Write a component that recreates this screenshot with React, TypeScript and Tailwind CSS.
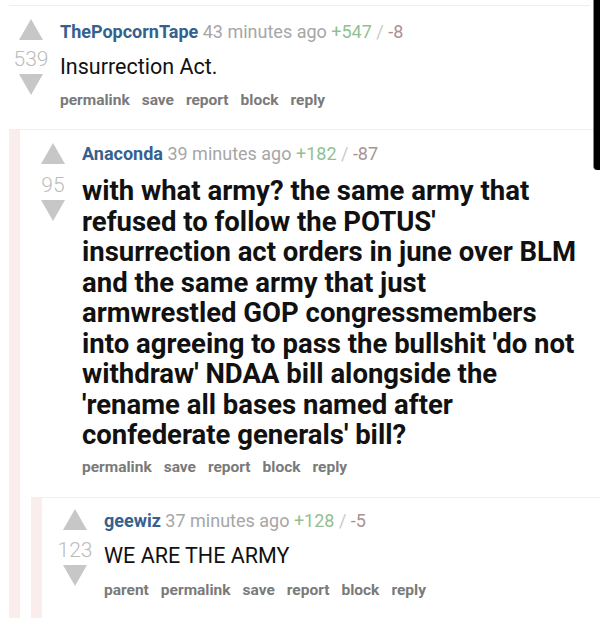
import React from "react";

function Up() {
  return (
    <svg width="24" height="21" viewBox="0 0 24 21" className="block">
      <polygon points="12,0 24,21 0,21" fill="#c7c7c7" />
    </svg>
  );
}
function Down() {
  return (
    <svg width="24" height="21" viewBox="0 0 24 21" className="block">
      <polygon points="0,0 24,0 12,21" fill="#c7c7c7" />
    </svg>
  );
}

function Links({ items }: { items: string[] }) {
  return (
    <div className="flex gap-[12px] text-[15.5px] leading-[20px] font-bold text-[#7a7a7a]">
      {items.map((i) => (
        <span key={i}>{i}</span>
      ))}
    </div>
  );
}

function Header({ user, time, up, down }: { user: string; time: string; up: string; down: string }) {
  return (
    <div className="text-[18px] leading-[24px] whitespace-nowrap">
      <span className="font-bold text-[#36618f]">{user}</span>{" "}
      <span className="text-[#a6a6a6]">{time}</span>{" "}
      <span className="text-[#92c092]">{up}</span>{" "}
      <span className="text-[#cacaca]">/</span>{" "}
      <span className="text-[#ab9292]">{down}</span>
    </div>
  );
}

function Votes({ score, numTop, downTop }: { score: string; numTop: string; downTop: string }) {
  return (
    <div className="w-[44px] flex flex-col items-center shrink-0">
      <Up />
      <div className={`text-[21px] leading-[22px] text-[#bcbcbc] font-light ${numTop}`}>{score}</div>
      <div className={downTop}>
        <Down />
      </div>
    </div>
  );
}

const body = [
  "with what army? the same army that",
  "refused to follow the POTUS'",
  "insurrection act orders in june over BLM",
  "and the same army that just",
  "armwrestled GOP congressmembers",
  "into agreeing to pass the bullshit 'do not",
  "withdraw' NDAA bill alongside the",
  "'rename all bases named after",
  "confederate generals' bill?",
];

export default function App() {
  return (
    <div
      className="w-[600px] h-[618px] bg-white relative overflow-hidden"
      style={{ fontFamily: "Roboto, 'Noto Sans', sans-serif" }}
    >
      <div className="h-[5px]" />
      {/* Comment 1 */}
      <div className="ml-[9px] mr-[10px] border-t border-[#efefef]">
        <div className="flex gap-[7px] pt-[13px] pb-[19px]">
          <Votes score="539" numTop="mt-[8px]" downTop="mt-[4px]" />
          <div className="mt-[1px]">
            <Header user="ThePopcornTape" time="43 minutes ago" up="+547" down="-8" />
            <div className="mt-[9px] text-[21.5px] leading-[28px] text-[#111]">Insurrection Act.</div>
            <div className="mt-[9px]">
              <Links items={["permalink", "save", "report", "block", "reply"]} />
            </div>
          </div>
        </div>
      </div>
      {/* Comment 2 */}
      <div className="flex">
        <div className="w-[9px] shrink-0 bg-white" />
        <div className="flex-1 border-t border-[#efefef] flex">
          <div className="w-[11px] shrink-0 bg-[#f9eeec] h-[600px]" />
          <div className="pl-[11px] flex-1">
            <div className="flex gap-[7px] pt-[13px] pb-[20px]">
              <Votes score="95" numTop="mt-[10px]" downTop="mt-[4px]" />
              <div className="-mt-[1px]">
                <Header user="Anaconda" time="39 minutes ago" up="+182" down="-87" />
                <div className="mt-[10px] text-[27.5px] leading-[30.5px] font-bold text-[#111] whitespace-nowrap">
                  {body.map((l, i) => (
                    <div key={i}>{l}</div>
                  ))}
                </div>
                <div className="mt-[6px]">
                  <Links items={["permalink", "save", "report", "block", "reply"]} />
                </div>
              </div>
            </div>
            {/* Comment 3 */}
            <div className="border-t border-[#efefef] flex">
              <div className="w-[11px] shrink-0 bg-[#f9eeec] h-[200px]" />
              <div className="pl-[11px] flex-1">
                <div className="flex gap-[7px] pt-[11px]">
                  <Votes score="123" numTop="mt-[9px]" downTop="mt-[4px]" />
                  <div className="mt-[0px]">
                    <Header user="geewiz" time="37 minutes ago" up="+128" down="-5" />
                    <div className="mt-[9px] text-[21.5px] leading-[28px] text-[#111]">WE ARE THE ARMY</div>
                    <div className="mt-[10px]">
                      <Links items={["parent", "permalink", "save", "report", "block", "reply"]} />
                    </div>
                  </div>
                </div>
              </div>
            </div>
          </div>
        </div>
      </div>
      {/* black edge */}
      <div className="absolute right-0 top-0 w-[7px] h-[170px] bg-black rounded-bl-[4px] border-l border-[#888]" />
    </div>
  );
}
